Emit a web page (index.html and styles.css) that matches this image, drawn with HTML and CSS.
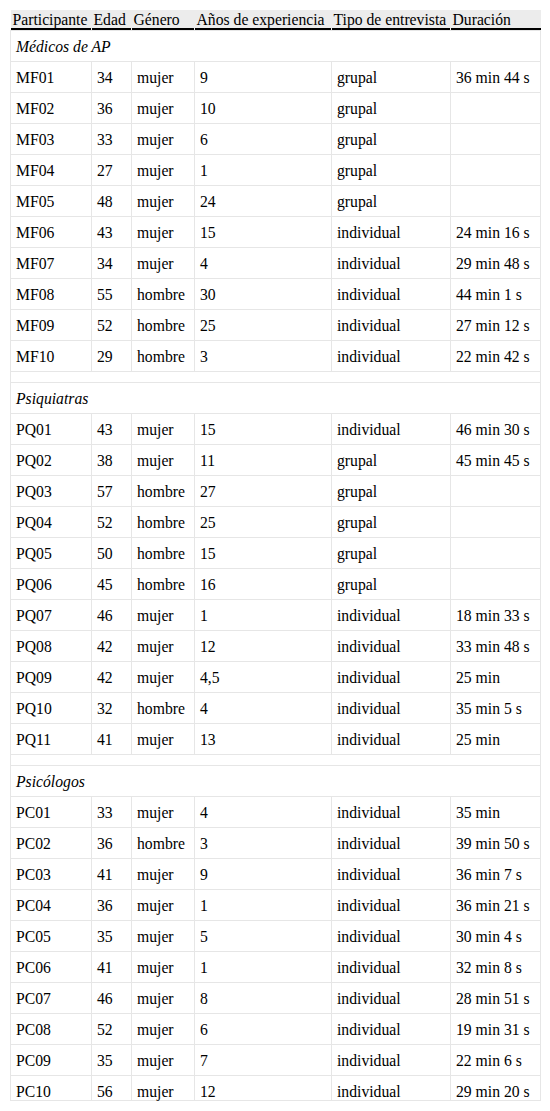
FILE: index.html
```html
<!DOCTYPE html>
<html lang="es">
<head>
<meta charset="utf-8">
<title>Participantes</title>
<link rel="stylesheet" href="styles.css">
</head>
<body>
<table class="tbl">
<colgroup>
<col class="c1"><col class="c2"><col class="c3"><col class="c4"><col class="c5"><col class="c6">
</colgroup>
<thead>
<tr><th>Participante</th><th>Edad</th><th>Género</th><th>Años de experiencia</th><th>Tipo de entrevista</th><th>Duración</th></tr>
</thead>
<tbody>
<tr class="sec"><td colspan="6">Médicos de AP</td></tr>
<tr><td>MF01</td><td>34</td><td>mujer</td><td>9</td><td>grupal</td><td>36 min 44 s</td></tr>
<tr><td>MF02</td><td>36</td><td>mujer</td><td>10</td><td>grupal</td><td></td></tr>
<tr><td>MF03</td><td>33</td><td>mujer</td><td>6</td><td>grupal</td><td></td></tr>
<tr><td>MF04</td><td>27</td><td>mujer</td><td>1</td><td>grupal</td><td></td></tr>
<tr><td>MF05</td><td>48</td><td>mujer</td><td>24</td><td>grupal</td><td></td></tr>
<tr><td>MF06</td><td>43</td><td>mujer</td><td>15</td><td>individual</td><td>24 min 16 s</td></tr>
<tr><td>MF07</td><td>34</td><td>mujer</td><td>4</td><td>individual</td><td>29 min 48 s</td></tr>
<tr><td>MF08</td><td>55</td><td>hombre</td><td>30</td><td>individual</td><td>44 min 1 s</td></tr>
<tr><td>MF09</td><td>52</td><td>hombre</td><td>25</td><td>individual</td><td>27 min 12 s</td></tr>
<tr><td>MF10</td><td>29</td><td>hombre</td><td>3</td><td>individual</td><td>22 min 42 s</td></tr>
<tr class="gap"><td colspan="6"></td></tr>
<tr class="sec"><td colspan="6">Psiquiatras</td></tr>
<tr><td>PQ01</td><td>43</td><td>mujer</td><td>15</td><td>individual</td><td>46 min 30 s</td></tr>
<tr><td>PQ02</td><td>38</td><td>mujer</td><td>11</td><td>grupal</td><td>45 min 45 s</td></tr>
<tr><td>PQ03</td><td>57</td><td>hombre</td><td>27</td><td>grupal</td><td></td></tr>
<tr><td>PQ04</td><td>52</td><td>hombre</td><td>25</td><td>grupal</td><td></td></tr>
<tr><td>PQ05</td><td>50</td><td>hombre</td><td>15</td><td>grupal</td><td></td></tr>
<tr><td>PQ06</td><td>45</td><td>hombre</td><td>16</td><td>grupal</td><td></td></tr>
<tr><td>PQ07</td><td>46</td><td>mujer</td><td>1</td><td>individual</td><td>18 min 33 s</td></tr>
<tr><td>PQ08</td><td>42</td><td>mujer</td><td>12</td><td>individual</td><td>33 min 48 s</td></tr>
<tr><td>PQ09</td><td>42</td><td>mujer</td><td>4,5</td><td>individual</td><td>25 min</td></tr>
<tr><td>PQ10</td><td>32</td><td>hombre</td><td>4</td><td>individual</td><td>35 min 5 s</td></tr>
<tr><td>PQ11</td><td>41</td><td>mujer</td><td>13</td><td>individual</td><td>25 min</td></tr>
<tr class="gap"><td colspan="6"></td></tr>
<tr class="sec"><td colspan="6">Psicólogos</td></tr>
<tr><td>PC01</td><td>33</td><td>mujer</td><td>4</td><td>individual</td><td>35 min</td></tr>
<tr><td>PC02</td><td>36</td><td>hombre</td><td>3</td><td>individual</td><td>39 min 50 s</td></tr>
<tr><td>PC03</td><td>41</td><td>mujer</td><td>9</td><td>individual</td><td>36 min 7 s</td></tr>
<tr><td>PC04</td><td>36</td><td>mujer</td><td>1</td><td>individual</td><td>36 min 21 s</td></tr>
<tr><td>PC05</td><td>35</td><td>mujer</td><td>5</td><td>individual</td><td>30 min 4 s</td></tr>
<tr><td>PC06</td><td>41</td><td>mujer</td><td>1</td><td>individual</td><td>32 min 8 s</td></tr>
<tr><td>PC07</td><td>46</td><td>mujer</td><td>8</td><td>individual</td><td>28 min 51 s</td></tr>
<tr><td>PC08</td><td>52</td><td>mujer</td><td>6</td><td>individual</td><td>19 min 31 s</td></tr>
<tr><td>PC09</td><td>35</td><td>mujer</td><td>7</td><td>individual</td><td>22 min 6 s</td></tr>
<tr class="last"><td>PC10</td><td>56</td><td>mujer</td><td>12</td><td>individual</td><td>29 min 20 s</td></tr>
</tbody>
</table>
</body>
</html>
```
FILE: styles.css
```css
html, body {
  margin: 0;
  padding: 0;
  background: #fff;
}
body {
  padding: 10px;
  font-family: "Liberation Serif", "Times New Roman", serif;
  font-size: 15.7px;
  color: #000;
}
.tbl {
  border-collapse: collapse;
  table-layout: fixed;
  width: 530px;
}
.c1 { width: 81px; }
.c2 { width: 40px; }
.c3 { width: 63px; }
.c4 { width: 137px; }
.c5 { width: 119px; }
.c6 { width: 90px; }
.tbl th {
  font-weight: normal;
  text-align: left;
  padding: 2px 2px 2px;
  line-height: 16px;
  white-space: nowrap;
  border: none;
  background: linear-gradient(#000, #000) left bottom / calc(100% - 1px) 2px no-repeat, #ececec;
}
.tbl th:last-child {
  background: linear-gradient(#000, #000) left bottom / 100% 2px no-repeat, #ececec;
}
.tbl td {
  border: 1px solid #e6e6e6;
  padding: 8px 5px 6px;
  line-height: 16px;
  white-space: nowrap;
}
.sec td {
  font-style: italic;
}
.gap td {
  padding: 0;
  height: 10px;
}
.last td {
  padding-bottom: 0;
}
```
